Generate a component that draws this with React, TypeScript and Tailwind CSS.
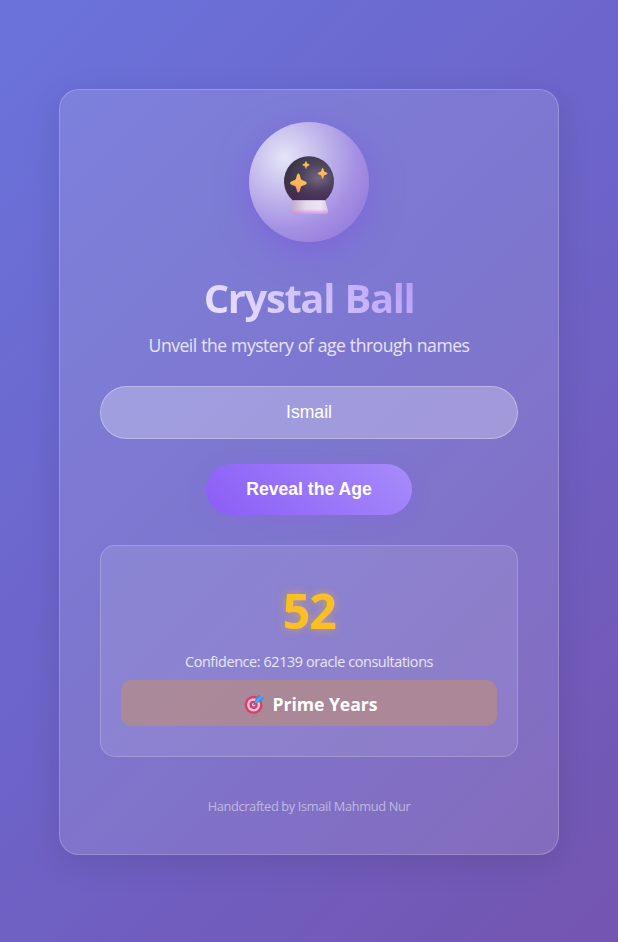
import React from "react";

function CrystalBallIcon() {
  const star = (x: number, y: number, w: number, h: number) =>
    `M${x} ${y - h}C${x + w * 0.22} ${y - h} ${x + w * 0.2} ${y - h * 0.4} ${x + w * 0.42} ${y - h * 0.32}C${x + w * 0.6} ${y - h * 0.22} ${x + w} ${y - h * 0.2} ${x + w} ${y}C${x + w} ${y + h * 0.2} ${x + w * 0.6} ${y + h * 0.22} ${x + w * 0.42} ${y + h * 0.32}C${x + w * 0.2} ${y + h * 0.4} ${x + w * 0.22} ${y + h} ${x} ${y + h}C${x - w * 0.22} ${y + h} ${x - w * 0.2} ${y + h * 0.4} ${x - w * 0.42} ${y + h * 0.32}C${x - w * 0.6} ${y + h * 0.22} ${x - w} ${y + h * 0.2} ${x - w} ${y}C${x - w} ${y - h * 0.2} ${x - w * 0.6} ${y - h * 0.22} ${x - w * 0.42} ${y - h * 0.32}C${x - w * 0.2} ${y - h * 0.4} ${x - w * 0.22} ${y - h} ${x} ${y - h}Z`;
  return (
    <svg width="80" height="80" viewBox="0 0 80 80" className="block">
      <defs>
        <radialGradient id="orb" cx="0.68" cy="0.5" r="0.6">
          <stop offset="0" stopColor="#736780" />
          <stop offset="0.5" stopColor="#50465f" />
          <stop offset="1" stopColor="#3c3547" />
        </radialGradient>
        <linearGradient id="orbLow" x1="0" y1="0" x2="0" y2="1">
          <stop offset="0.55" stopColor="#4c2360" stopOpacity="0" />
          <stop offset="0.95" stopColor="#4c2360" stopOpacity="0.5" />
        </linearGradient>
        <linearGradient id="base" x1="0" y1="0" x2="1" y2="0">
          <stop offset="0" stopColor="#b9a9c8" />
          <stop offset="0.4" stopColor="#e2d8e9" />
          <stop offset="0.8" stopColor="#eee5f4" />
          <stop offset="1" stopColor="#d8c9e2" />
        </linearGradient>
        <linearGradient id="baseLow" x1="0" y1="0" x2="0" y2="1">
          <stop offset="0.65" stopColor="#d79be6" stopOpacity="0" />
          <stop offset="1" stopColor="#d183e4" stopOpacity="0.9" />
        </linearGradient>
        <linearGradient id="gold" x1="0.6" y1="0" x2="0.3" y2="1">
          <stop offset="0" stopColor="#fbc84e" />
          <stop offset="0.55" stopColor="#fbb45b" />
          <stop offset="1" stopColor="#f59168" />
        </linearGradient>
      </defs>
      <path d="M23 56.4A25 25 0 1 1 55 56.4Z" fill="url(#orb)" />
      <path d="M23 56.4A25 25 0 1 1 55 56.4Z" fill="url(#orbLow)" />
      <path d="M23.3 56.2H55L58 66.5Q58.6 69.8 55 69.8H23.5Q19.6 69.8 20.4 66.5Z" fill="url(#base)" />
      <path d="M23.3 56.2H55L58 66.5Q58.6 69.8 55 69.8H23.5Q19.6 69.8 20.4 66.5Z" fill="url(#baseLow)" />
      <path d={star(28.4, 39, 8.3, 9.6)} fill="url(#gold)" />
      <path d={star(36, 20.9, 3.4, 4)} fill="url(#gold)" />
      <path d={star(52.6, 29.4, 4.8, 5.4)} fill="url(#gold)" />
    </svg>
  );
}

function TargetIcon() {
  return (
    <svg width="21" height="20" viewBox="0 0 21 20" className="block">
      <circle cx="9.6" cy="10.8" r="9" fill="#e23b66" />
      <circle cx="9.6" cy="10.8" r="6.6" fill="#dccbe3" />
      <circle cx="9.6" cy="10.8" r="4.1" fill="#dc3c69" />
      <circle cx="9.6" cy="10.8" r="1.8" fill="#e3c8df" />
      <path d="M9.6 10.8L14 6.2" stroke="#6b5f96" strokeWidth="1.3" />
      <path d="M11.2 6L11.9 3.7L15.5 .3L16.6 3L20.2 4.1L16.8 8L13.8 8.6L11.2 8.6Z" fill="#2c96ef" />
      <path d="M11.2 8.8L16.8 3.2" stroke="#67baf8" strokeWidth="1.2" />
    </svg>
  );
}

export default function App() {
  return (
    <main className="flex h-[942px] w-full items-start justify-center bg-[linear-gradient(135deg,#6a73db_0%,#6d63c8_50%,#7455b0_100%)] pt-[89px] font-['Open_Sans','Noto_Sans',sans-serif] text-white">
      <section className="flex h-[766px] w-[500px] flex-col items-center rounded-[20px] border border-white/20 bg-[linear-gradient(rgba(255,255,255,0.12),rgba(255,255,255,0.12))] bg-origin-border px-10 pt-8 shadow-[0_8px_32px_rgba(0,0,0,0.1)]">
        <div className="flex size-[120px] shrink-0 items-center justify-center rounded-full bg-[radial-gradient(circle_at_30%_30%,rgba(255,255,255,0.8),rgba(178,152,232,0.75)_60%,rgba(145,98,222,0.55))] shadow-[0_8px_32px_rgba(130,80,225,0.5)]">
          <div className="pt-[4px] pl-[2px]">
            <CrystalBallIcon />
          </div>
        </div>
        <h1 className="mt-[32px] h-[50px] bg-linear-45 from-[#ece6ff] to-[#b79df8] bg-clip-text text-[40px] leading-[48px] font-bold tracking-[-1.4px] whitespace-nowrap text-transparent [word-spacing:1.5px]">
          Crystal Ball
        </h1>
        <p className="mt-[9px] h-6 text-[17.6px] leading-6 tracking-[-0.5px] whitespace-nowrap text-white/80 [word-spacing:0.4px]">
          Unveil the mystery of age through names
        </p>
        <input
          defaultValue="Ismail"
          className="mt-[29px] h-[53px] w-full shrink-0 rounded-full border border-white/30 bg-white/27 text-center font-['Liberation_Sans',sans-serif] text-[17.6px] text-white outline-none"
        />
        <button className="mt-[25px] h-[51px] w-[206px] shrink-0 rounded-full bg-linear-45 from-[#8b5cf6] to-[#a78bfa] font-['Liberation_Sans',sans-serif] text-[17.6px] font-bold whitespace-nowrap shadow-[0_4px_20px_rgba(139,92,246,0.2)]">
          Reveal the Age
        </button>
        <div className="mt-[30px] flex h-[212px] w-full shrink-0 flex-col items-center rounded-[15px] border border-white/20 bg-white/10 px-5 pt-[34px]">
          <div className="h-16 text-[48px] leading-[62px] font-bold tracking-[-1px] text-[#fbbf24] [text-shadow:0_0_10px_rgba(251,191,36,0.5)]">
            52
          </div>
          <p className="mt-[8px] h-5 text-[14.4px] leading-5 tracking-[-0.39px] whitespace-nowrap text-white/80">
            Confidence: 62139 oracle consultations
          </p>
          <div className="mt-2 flex h-[46px] w-full items-center justify-center gap-[8px] rounded-[10px] bg-[#c08e74]/60 pt-[2px] pl-[3px] text-[17.6px] font-bold">
            <TargetIcon />
            <span className="tracking-[-0.05px] whitespace-nowrap">Prime Years</span>
          </div>
        </div>
        <footer className="mt-[39px] h-5 text-[12.8px] leading-5 tracking-[-0.35px] whitespace-nowrap text-white/50">
          Handcrafted by Ismail Mahmud Nur
        </footer>
      </section>
    </main>
  );
}
